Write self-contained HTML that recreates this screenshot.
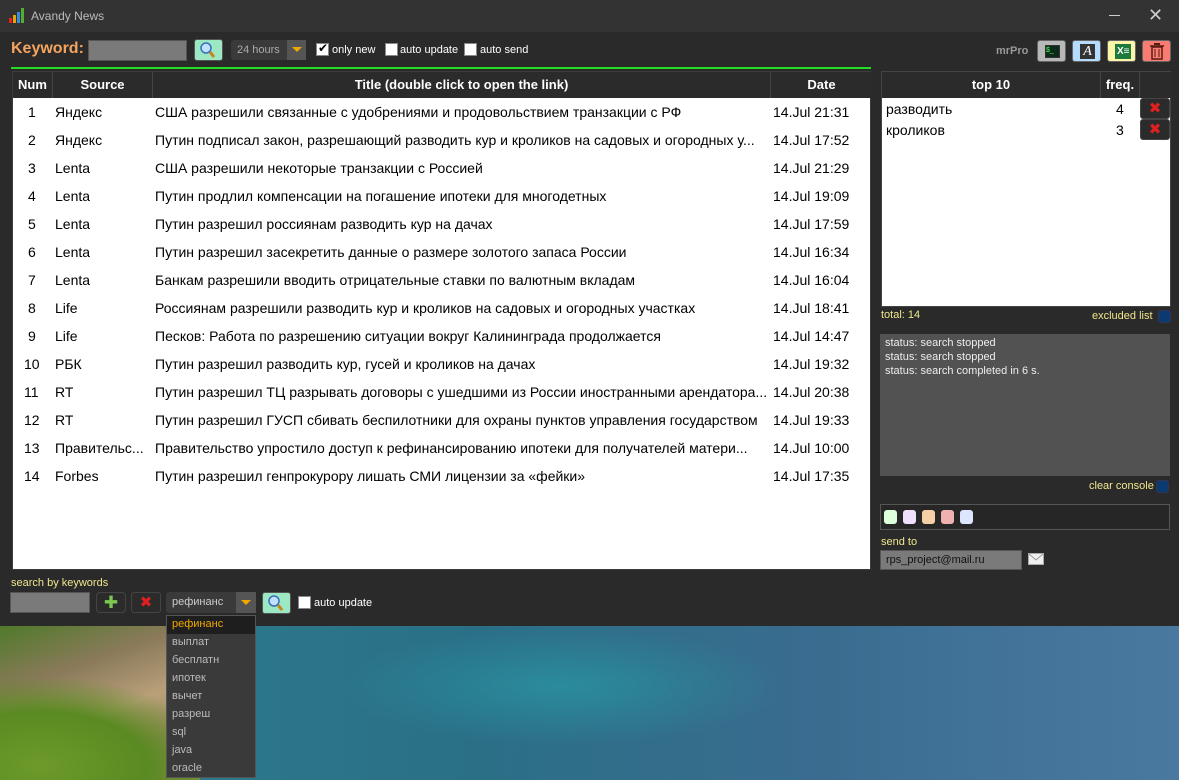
<!DOCTYPE html>
<html><head><meta charset="utf-8">
<style>
*{margin:0;padding:0;box-sizing:border-box}
body{width:1179px;height:780px;overflow:hidden;position:relative;font-family:"Liberation Sans","DejaVu Sans",sans-serif;background:#2a6c86}
.abs{position:absolute}
#bg{left:0;top:626px;width:1179px;height:154px;background:
radial-gradient(ellipse 220px 60px at 560px 60px,#2a8c9c 0%,rgba(42,140,156,0) 100%),
linear-gradient(90deg,#2f7f8e 0%,#2a6f86 40%,#3a6c90 70%,#4a79a0 100%)}
#land{left:0;top:626px;width:200px;height:154px;background:
radial-gradient(ellipse 180px 90px at 40px 140px,#6c9a2a 0%,#5a8a22 60%,rgba(90,138,34,0) 100%),
linear-gradient(160deg,#4f7a2a 0%,#8a7a5a 30%,#b9a07a 55%,#a08a60 75%,#7a8a3a 100%)}
#win{left:0;top:0;width:1179px;height:626px;background:#2a2a2a}
#tb{left:0;top:0;width:1179px;height:32px;background:#333}
.t{color:#fff;font-size:14px;white-space:nowrap}
table{border-collapse:collapse}
#main{left:12px;top:71px;width:859px;height:499px;background:#fff;border:1px solid #3c3c3c}
.hd{position:absolute;top:0;height:26px;background:#2b2b2b;color:#fff;font-weight:bold;font-size:13px;line-height:26px;text-align:center;border-right:1px solid #444}
.row{position:absolute;left:0;height:28px;font-size:14px;line-height:28px;color:#000;white-space:nowrap}
.row span{position:absolute;overflow:hidden}
.chk{position:absolute;width:13px;height:13px;background:#fff;border:1px solid #888}
.lbl{position:absolute;color:#fff;font-size:11px}
.btn{position:absolute;border-radius:3px}
.xbtn{position:absolute;width:30px;height:21px;background:#2b2b2b;border:1px solid #444;border-radius:3px;color:#e02020;font-weight:bold;font-size:15px;text-align:center;line-height:19px}
.dd{position:absolute;left:166px;width:90px;height:18px;font-size:11px;color:#bbb;padding-left:6px;line-height:18px}
</style></head><body>
<div id="bg" class="abs"></div>
<div id="land" class="abs"></div>
<div id="win" class="abs"></div>
<div id="tb" class="abs"></div>
<!-- logo -->
<svg class="abs" style="left:9px;top:8px" width="16" height="16"><rect x="0" y="10" width="3" height="5" fill="#e82020"/><rect x="4" y="7" width="3" height="8" fill="#f0a000"/><rect x="8" y="4" width="3" height="11" fill="#3a8ae0"/><rect x="12" y="0" width="3" height="15" fill="#50b030"/></svg>
<div class="abs" style="left:31px;top:9px;color:#bbb;font-size:12px">Avandy News</div>
<div class="abs" style="left:1109px;top:15px;width:11px;height:1px;background:#ccc"></div>
<div class="abs" style="left:1148px;top:5px;color:#ccc;font-size:18px;line-height:20px">✕</div>

<!-- toolbar -->
<div class="abs" style="left:11px;top:40px;color:#f4a460;font-weight:bold;font-size:16px">Keyword:</div>
<div class="abs" style="left:88px;top:40px;width:99px;height:21px;background:#7a7a7a;border:1px solid #555"></div>
<div class="btn" style="left:194px;top:39px;width:29px;height:22px;background:#9be8c3;border:1px solid #555"><svg width="27" height="20"><circle cx="11" cy="8" r="5" fill="#bfe3ff" stroke="#3a6fbf" stroke-width="1.5"/><line x1="15" y1="12" x2="19" y2="17" stroke="#c8831a" stroke-width="3"/></svg></div>
<div class="abs" style="left:231px;top:40px;width:75px;height:20px;background:#3a3a3a;border-radius:3px;color:#aaa;font-size:11px;line-height:20px;padding-left:6px">24 hours<div class="abs" style="left:56px;top:0;width:19px;height:20px;background:#555"></div><div class="abs" style="left:61px;top:7px;border-left:5px solid transparent;border-right:5px solid transparent;border-top:5px solid #f0a800"></div></div>
<div class="chk" style="left:316px;top:43px"><div style="position:absolute;left:1px;top:-3px;font-size:12px;color:#000;font-weight:bold">✔</div></div>
<div class="lbl" style="left:332px;top:44px">only new</div>
<div class="chk" style="left:385px;top:43px"></div><div class="lbl" style="left:400px;top:44px">auto update</div>
<div class="chk" style="left:464px;top:43px"></div><div class="lbl" style="left:480px;top:44px">auto send</div>
<div class="abs" style="left:996px;top:45px;color:#999;font-weight:bold;font-size:11px">mrPro</div>
<div class="btn" style="left:1037px;top:40px;width:29px;height:22px;background:#b8b8b8;border:1px solid #666"><div style="position:absolute;left:7px;top:4px;width:15px;height:13px;background:#0a2a1a;border:1px solid #333;color:#5f5;font-size:7px;line-height:9px">$_</div></div>
<div class="btn" style="left:1072px;top:40px;width:29px;height:22px;background:#b5dcff;border:1px solid #666"><div style="position:absolute;left:7px;top:3px;width:15px;height:15px;background:#333;color:#fff;font-family:'Liberation Serif',serif;font-style:italic;font-size:14px;line-height:15px;text-align:center">A</div></div>
<div class="btn" style="left:1107px;top:40px;width:29px;height:22px;background:#fdf5a8;border:1px solid #666"><div style="position:absolute;left:7px;top:3px;width:16px;height:15px;background:#1d7a3a;color:#fff;font-size:10px;font-weight:bold;line-height:15px;padding-left:2px">X≡</div></div>
<div class="btn" style="left:1142px;top:40px;width:29px;height:22px;background:#f97c72;border:1px solid #666"><svg width="27" height="20"><rect x="9" y="6" width="10" height="12" fill="none" stroke="#5a1a10" stroke-width="1.5"/><line x1="7" y1="5" x2="21" y2="5" stroke="#5a1a10" stroke-width="1.5"/><line x1="12" y1="8" x2="12" y2="16" stroke="#5a1a10"/><line x1="16" y1="8" x2="16" y2="16" stroke="#5a1a10"/><rect x="11" y="2" width="6" height="2" fill="#5a1a10"/></svg></div>
<div class="abs" style="left:11px;top:67px;width:860px;height:2px;background:#22dd22"></div>

<!-- main table -->
<div id="main" class="abs">
<div class="hd" style="left:0;width:40px">Num</div>
<div class="hd" style="left:40px;width:100px">Source</div>
<div class="hd" style="left:140px;width:618px">Title (double click to open the link)</div>
<div class="hd" style="left:758px;width:101px;border-right:none">Date</div>
<div id="rows"></div>
</div>

<!-- right panel -->
<div class="abs" style="left:881px;top:71px;width:290px;height:236px;background:#fff;border:1px solid #444">
<div class="hd" style="left:0;width:219px">top 10</div>
<div class="hd" style="left:219px;width:39px">freq.</div>
<div class="hd" style="left:258px;width:31px;border-right:none"></div>
<div class="abs" style="left:4px;top:29px;font-size:14px">разводить</div>
<div class="abs" style="left:234px;top:29px;font-size:14px">4</div>
<div class="abs" style="left:4px;top:50px;font-size:14px">кроликов</div>
<div class="abs" style="left:234px;top:50px;font-size:14px">3</div>
<div class="xbtn" style="left:258px;top:26px">✖</div>
<div class="xbtn" style="left:258px;top:47px">✖</div>
</div>
<div class="abs" style="left:881px;top:309px;color:#f0e68c;font-size:11px">total: 14</div>
<div class="abs" style="left:1092px;top:310px;color:#f0e68c;font-size:11px">excluded list</div>
<div class="abs" style="left:1158px;top:310px;width:13px;height:13px;background:#0a3a70;border:1px solid #335;border-radius:3px"></div>
<div class="abs" style="left:880px;top:334px;width:290px;height:142px;background:#525252;color:#eee;font-size:11px;line-height:14px;padding:2px 5px">status: search stopped<br>status: search stopped<br>status: search completed in 6 s.</div>
<div class="abs" style="left:1089px;top:480px;color:#f0e68c;font-size:11px">clear console</div>
<div class="abs" style="left:1156px;top:480px;width:13px;height:13px;background:#0a3a70;border:1px solid #335;border-radius:3px"></div>
<div class="abs" style="left:880px;top:504px;width:290px;height:26px;background:#262626;border:1px solid #555"></div>
<div class="abs" style="left:884px;top:510px;width:13px;height:14px;background:#dcffdc;border-radius:3px"></div>
<div class="abs" style="left:903px;top:510px;width:13px;height:14px;background:#efe0ff;border-radius:3px"></div>
<div class="abs" style="left:922px;top:510px;width:13px;height:14px;background:#f5cfa5;border-radius:3px"></div>
<div class="abs" style="left:941px;top:510px;width:13px;height:14px;background:#f0b0b0;border-radius:3px"></div>
<div class="abs" style="left:960px;top:510px;width:13px;height:14px;background:#dce6ff;border-radius:3px"></div>
<div class="abs" style="left:881px;top:536px;color:#f0e68c;font-size:11px">send to</div>
<div class="abs" style="left:880px;top:550px;width:142px;height:20px;background:#7a7a7a;border:1px solid #555;color:#111;font-size:11px;line-height:18px;padding-left:5px">rps_project@mail.ru</div>
<svg class="abs" style="left:1028px;top:553px" width="16" height="12"><rect x="0.5" y="0.5" width="15" height="11" fill="#f0f0f0" stroke="#aaa"/><path d="M1 1 L8 7 L15 1" fill="none" stroke="#999"/></svg>

<!-- bottom -->
<div class="abs" style="left:11px;top:577px;color:#f0e68c;font-size:11px">search by keywords</div>
<div class="abs" style="left:10px;top:592px;width:80px;height:21px;background:#7a7a7a;border:1px solid #555"></div>
<div class="abs" style="left:96px;top:592px;width:30px;height:21px;border:1px solid #444;border-radius:4px;background:#2b2b2b;color:#7ec850;font-size:17px;font-weight:bold;text-align:center;line-height:19px">✚</div>
<div class="xbtn" style="left:131px;top:592px">✖</div>
<div class="abs" style="left:166px;top:592px;width:90px;height:21px;background:#3a3a3a;border-radius:3px;color:#ccc;font-size:11px;line-height:21px;padding-left:6px">рефинанс<div class="abs" style="left:70px;top:0;width:20px;height:21px;background:#555"></div><div class="abs" style="left:75px;top:8px;border-left:5px solid transparent;border-right:5px solid transparent;border-top:5px solid #f0a800"></div></div>
<div class="btn" style="left:262px;top:592px;width:29px;height:22px;background:#9be8c3;border:1px solid #555"><svg width="27" height="20"><circle cx="11" cy="8" r="5" fill="#bfe3ff" stroke="#3a6fbf" stroke-width="1.5"/><line x1="15" y1="12" x2="19" y2="17" stroke="#c8831a" stroke-width="3"/></svg></div>
<div class="chk" style="left:298px;top:596px"></div><div class="lbl" style="left:314px;top:597px">auto update</div>

<div class="abs" style="left:166px;top:615px;width:90px;height:163px;background:#3a3a3a;border:1px solid #555"></div>
<div class="abs" style="left:167px;top:616px;width:88px;height:18px;background:#1e1e1e"></div>
<div class="dd" style="top:615px;color:#f0a800">рефинанс</div>
<div class="dd" style="top:633px">выплат</div>
<div class="dd" style="top:651px">бесплатн</div>
<div class="dd" style="top:669px">ипотек</div>
<div class="dd" style="top:687px">вычет</div>
<div class="dd" style="top:705px">разреш</div>
<div class="dd" style="top:723px">sql</div>
<div class="dd" style="top:741px">java</div>
<div class="dd" style="top:759px">oracle</div>

<div id="rowsrc" style="display:none"></div>
<div class="abs" style="left:12px;top:97px;width:858px">
<div class="row" style="top:1px"><span style="left:16px">1</span><span style="left:43px">Яндекс</span><span style="left:143px">США разрешили связанные с удобрениями и продовольствием транзакции с РФ</span><span style="left:761px">14.Jul 21:31</span></div>
<div class="row" style="top:29px"><span style="left:16px">2</span><span style="left:43px">Яндекс</span><span style="left:143px;width:614px">Путин подписал закон, разрешающий разводить кур и кроликов на садовых и огородных у...</span><span style="left:761px">14.Jul 17:52</span></div>
<div class="row" style="top:57px"><span style="left:16px">3</span><span style="left:43px">Lenta</span><span style="left:143px">США разрешили некоторые транзакции с Россией</span><span style="left:761px">14.Jul 21:29</span></div>
<div class="row" style="top:85px"><span style="left:16px">4</span><span style="left:43px">Lenta</span><span style="left:143px">Путин продлил компенсации на погашение ипотеки для многодетных</span><span style="left:761px">14.Jul 19:09</span></div>
<div class="row" style="top:113px"><span style="left:16px">5</span><span style="left:43px">Lenta</span><span style="left:143px">Путин разрешил россиянам разводить кур на дачах</span><span style="left:761px">14.Jul 17:59</span></div>
<div class="row" style="top:141px"><span style="left:16px">6</span><span style="left:43px">Lenta</span><span style="left:143px">Путин разрешил засекретить данные о размере золотого запаса России</span><span style="left:761px">14.Jul 16:34</span></div>
<div class="row" style="top:169px"><span style="left:16px">7</span><span style="left:43px">Lenta</span><span style="left:143px">Банкам разрешили вводить отрицательные ставки по валютным вкладам</span><span style="left:761px">14.Jul 16:04</span></div>
<div class="row" style="top:197px"><span style="left:16px">8</span><span style="left:43px">Life</span><span style="left:143px">Россиянам разрешили разводить кур и кроликов на садовых и огородных участках</span><span style="left:761px">14.Jul 18:41</span></div>
<div class="row" style="top:225px"><span style="left:16px">9</span><span style="left:43px">Life</span><span style="left:143px">Песков: Работа по разрешению ситуации вокруг Калининграда продолжается</span><span style="left:761px">14.Jul 14:47</span></div>
<div class="row" style="top:253px"><span style="left:12px">10</span><span style="left:43px">РБК</span><span style="left:143px">Путин разрешил разводить кур, гусей и кроликов на дачах</span><span style="left:761px">14.Jul 19:32</span></div>
<div class="row" style="top:281px"><span style="left:12px">11</span><span style="left:43px">RT</span><span style="left:143px;width:614px">Путин разрешил ТЦ разрывать договоры с ушедшими из России иностранными арендатора...</span><span style="left:761px">14.Jul 20:38</span></div>
<div class="row" style="top:309px"><span style="left:12px">12</span><span style="left:43px">RT</span><span style="left:143px;width:614px">Путин разрешил ГУСП сбивать беспилотники для охраны пунктов управления государством</span><span style="left:761px">14.Jul 19:33</span></div>
<div class="row" style="top:337px"><span style="left:12px">13</span><span style="left:43px;width:96px">Правительс...</span><span style="left:143px;width:614px">Правительство упростило доступ к рефинансированию ипотеки для получателей матери...</span><span style="left:761px">14.Jul 10:00</span></div>
<div class="row" style="top:365px"><span style="left:12px">14</span><span style="left:43px">Forbes</span><span style="left:143px">Путин разрешил генпрокурору лишать СМИ лицензии за «фейки»</span><span style="left:761px">14.Jul 17:35</span></div>
</div>
</body></html>
